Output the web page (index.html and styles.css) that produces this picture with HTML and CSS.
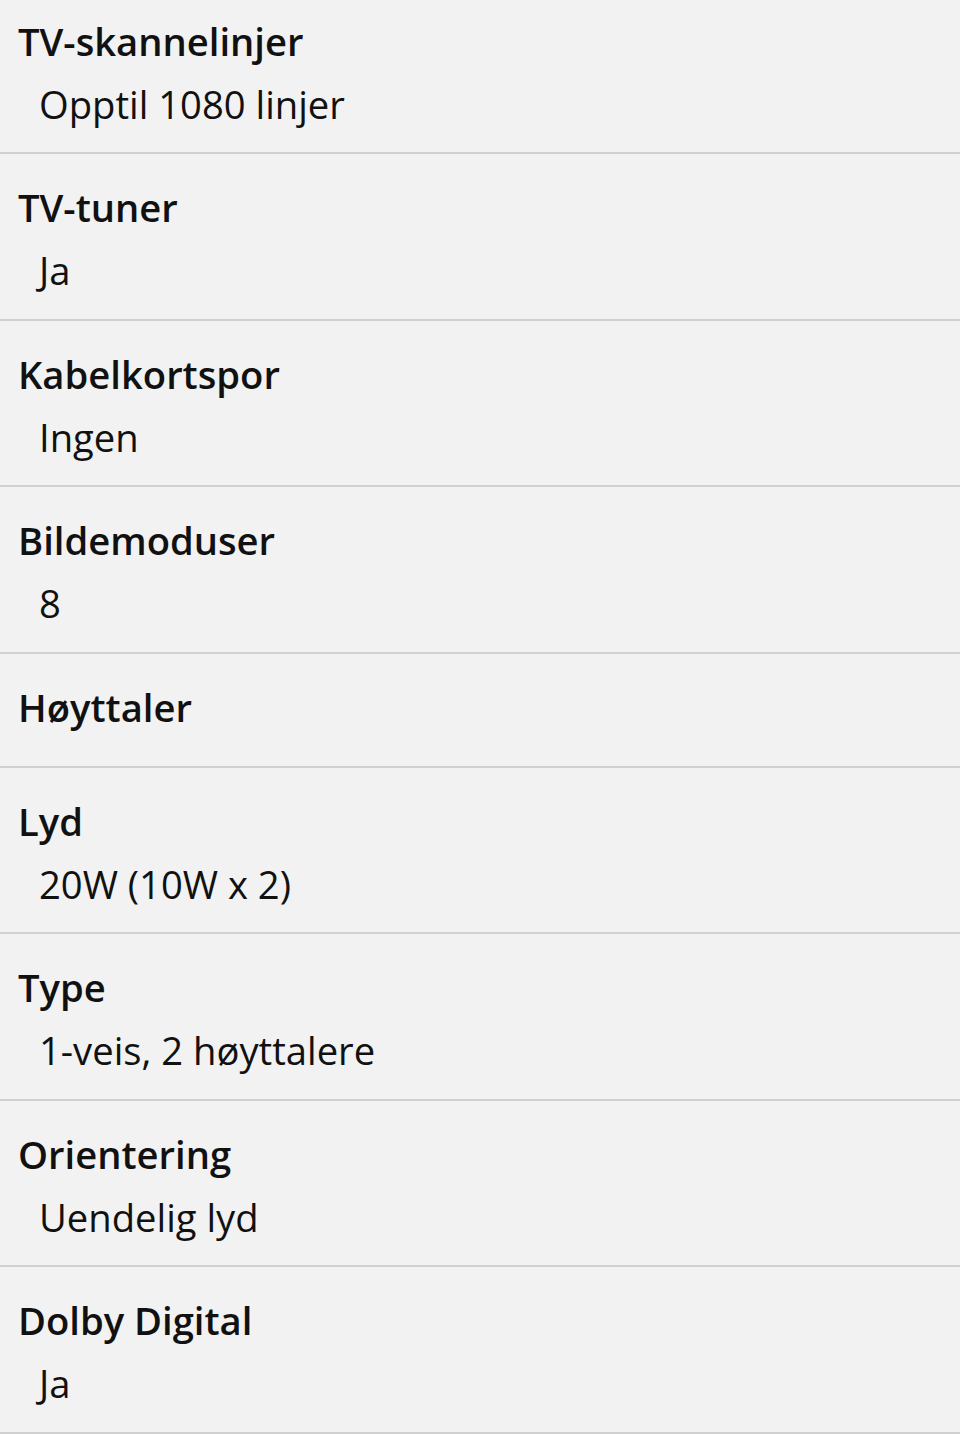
FILE: index.html
```html
<html>
<head>
<meta charset="utf-8">
<title>Spesifikasjoner</title>
<link rel="stylesheet" href="styles.css">
</head>
<body>

<div class="specs">

  <div class="spec">
    <div class="label">TV-skannelinjer</div>
    <div class="value">Opptil 1080 linjer</div>
  </div>

  <div class="spec">
    <div class="label">TV-tuner</div>
    <div class="value">Ja</div>
  </div>

  <div class="spec">
    <div class="label">Kabelkortspor</div>
    <div class="value">Ingen</div>
  </div>

  <div class="spec">
    <div class="label">Bildemoduser</div>
    <div class="value">8</div>
  </div>

  <div class="spec">
    <div class="label">Høyttaler</div>
  </div>

  <div class="spec">
    <div class="label">Lyd</div>
    <div class="value">20W (10W x 2)</div>
  </div>

  <div class="spec">
    <div class="label">Type</div>
    <div class="value">1-veis, 2 høyttalere</div>
  </div>

  <div class="spec">
    <div class="label">Orientering</div>
    <div class="value">Uendelig lyd</div>
  </div>

  <div class="spec">
    <div class="label">Dolby Digital</div>
    <div class="value">Ja</div>
  </div>

</div>

</body>
</html>
```

FILE: styles.css
```css
html {
  background: #f2f2f2;
}

body {
  margin: 0;
  color: #111;
  font: 400 38.2px/52px "Open Sans", "Noto Sans", sans-serif;
}

/* list is scrolled a little, first row is cut at the top */
.specs {
  margin-top: -12px;
}

.spec {
  padding: 27px 18px 22.4px;
  border-bottom: 2px solid #d0d0d0;
}

.label {
  font-weight: 600;
  margin-bottom: 11px;
}

.value {
  padding-left: 21px;
}
```
